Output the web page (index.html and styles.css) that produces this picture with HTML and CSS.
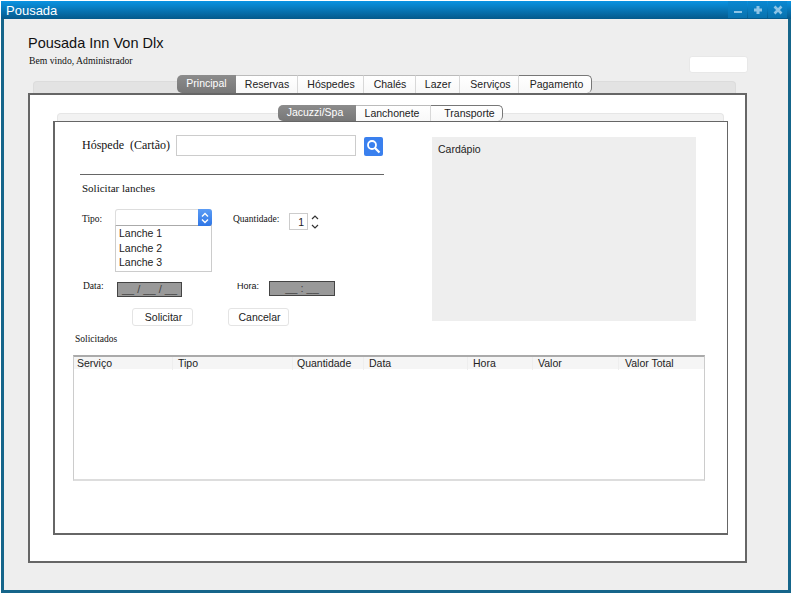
FILE: index.html
```html
<!DOCTYPE html>
<html lang="pt">
<head>
  <meta charset="UTF-8" />
  <title>Pousada</title>
  <link rel="stylesheet" href="styles.css">
</head>
<body>
  <div class="window">
    <div class="titlebar">
      <span class="title">Pousada</span>
      <div class="controls">
        <span class="ctrl"><svg width="10" height="10" viewBox="0 0 10 10"><path d="M1 7h8" stroke="#8cc4e6" stroke-width="2"/></svg></span>
        <span class="ctrl"><svg width="10" height="10" viewBox="0 0 10 10"><path d="M1 5h8M5 1v8" stroke="#8cc4e6" stroke-width="3"/></svg></span>
        <span class="ctrl"><svg width="10" height="10" viewBox="0 0 10 10"><path d="M1.5 1.5l7 7M8.500 1.500l-7 7" stroke="#8cc4e6" stroke-width="2.600"/></svg></span>
      </div>
    </div>

    <div class="content">
      <header class="app-header">
        <div class="brand">
          <h1>Pousada Inn Von Dlx</h1>
          <p class="welcome">Bem vindo, Administrador</p>
        </div>
        <div class="header-box"></div>
      </header>

      <div class="track main-track">
        <a class="tab active">Principal</a>
        <a class="tab t-reservas">Reservas</a>
        <a class="tab t-hospedes">Hóspedes</a>
        <a class="tab t-chales">Chalés</a>
        <a class="tab t-lazer">Lazer</a>
        <a class="tab t-servicos">Serviços</a>
        <a class="tab t-pagamento last">Pagamento</a>
      </div>

      <div class="outer-panel">
        <div class="track sub-track">
          <a class="tab active t-jacuzzi">Jacuzzi/Spa</a>
          <a class="tab t-lanchonete">Lanchonete</a>
          <a class="tab t-transporte last">Transporte</a>
        </div>

        <div class="inner-panel">
          <div class="columns">
            <div class="form">
              <div class="guest-row">
                <label class="guest-label">Hóspede&nbsp; (Cartão)</label>
                <input class="guest-input" type="text">
                <button class="search-btn">
                  <svg width="15" height="15" viewBox="0 0 15 15"><circle cx="6" cy="6" r="4" fill="none" stroke="#fff" stroke-width="1.800"/><path d="M9 9l4.500 4.500" stroke="#fff" stroke-width="2.200"/></svg>
                </button>
              </div>
              <div class="rule"></div>
              <h2>Solicitar lanches</h2>

              <div class="order-row">
                <label class="small-label l-tipo">Tipo:</label>
                <div class="select-col">
                  <div class="select">
                    <span class="select-arrow">
                      <svg width="10" height="14" viewBox="0 0 10 14"><path d="M2 5.500l3-3 3 3M2 8.500l3 3 3-3" fill="none" stroke="#fff" stroke-width="1.400"/></svg>
                    </span>
                  </div>
                  <ul class="options">
                    <li>Lanche 1</li>
                    <li>Lanche 2</li>
                    <li>Lanche 3</li>
                  </ul>
                </div>
                <label class="small-label l-qtd">Quantidade:</label>
                <div class="qty">1</div>
                <svg class="spin" width="10" height="18" viewBox="0 0 10 18"><path d="M2 6l3-3 3 3M2 12l3 3 3-3" fill="none" stroke="#333" stroke-width="1.200"/></svg>
              </div>

              <div class="date-row">
                <label class="small-label l-data">Data:</label>
                <div class="mask mask-date">__ / __ / __</div>
                <label class="small-label l-hora">Hora:</label>
                <div class="mask mask-time">__ : __</div>
              </div>

              <div class="actions">
                <button class="btn">Solicitar</button>
                <button class="btn">Cancelar</button>
              </div>
            </div>

            <aside class="menu-card">Cardápio</aside>
          </div>

          <p class="requested">Solicitados</p>
          <div class="grid-table">
            <div class="grid-head">
              <span>Serviço</span>
              <span>Tipo</span>
              <span class="col-qtd">Quantidade</span>
              <span>Data</span>
              <span>Hora</span>
              <span>Valor</span>
              <span class="col-total">Valor Total</span>
            </div>
          </div>
        </div>
      </div>
    </div>
  </div>
</body>
</html>
```

FILE: styles.css
```css
* {
  box-sizing: border-box;
}

body {
  margin: 0;
  background-color: #fff;
  font-family: "Liberation Sans", Arial, sans-serif;
  color: #222;
}

.window {
  width: 790px;
  height: 592px;
  margin: 1px 0 0 1px;
  display: flex;
  flex-direction: column;
}

.titlebar {
  height: 18px;
  background: linear-gradient(#0a93e2, #05598b);
  display: flex;
  justify-content: space-between;
  padding: 0 4px 0 5px;
}

.title {
  color: #fff;
  font-size: 13px;
  line-height: 19px;
}

.controls {
  display: flex;
  gap: 1px;
}

.ctrl {
  width: 19px;
  height: 17px;
  background: linear-gradient(#0a88d2, #0872ae);
  display: flex;
  align-items: center;
  justify-content: center;
}

.content {
  flex: 1;
  background-color: #eee;
  border: solid #15658a;
  border-width: 0 3px 3px;
}

.app-header {
  display: flex;
  justify-content: space-between;
  align-items: flex-end;
  padding: 16px 40px 0 24px;
}

.brand {
  padding-bottom: 5px;
}

h1 {
  margin: 0;
  font-size: 14.5px;
  font-weight: normal;
  line-height: 17px;
  color: #111;
}

.welcome {
  margin: 2px 0 0 1px;
  font-family: "Liberation Serif", serif;
  font-size: 9.7px;
  line-height: 14px;
  color: #111;
}

.header-box {
  width: 59px;
  height: 17px;
  background-color: #fff;
  border: 1px solid #e8e8e8;
  border-radius: 3px;
}

.track {
  display: flex;
  border-radius: 4px 4px 0 0;
}

.main-track {
  width: 703px;
  height: 12px;
  margin: 8px 0 0 29px;
  padding-left: 143px;
  background-color: #e3e3e3;
  border: 1px solid #dcdcdc;
  border-bottom: 0;
}

.sub-track {
  width: 667px;
  height: 8px;
  margin: 18px 0 0 27px;
  padding-left: 220px;
  background-color: #f2f2f2;
  border: 1px solid #e6e6e6;
  border-bottom: 0;
}

.tab {
  height: 18px;
  margin-top: -7px;
  padding-left: 1px;
  background: linear-gradient(#fff, #f8f8f8);
  border-top: 1px solid #bbb;
  border-right: 1px solid #d8d8d8;
  font-size: 10.5px;
  line-height: 16px;
  text-align: center;
  color: #222;
  width: 59px;
  flex: none;
}

.tab.active {
  width: 59px;
  padding-left: 0;
  background: linear-gradient(#8c8c8c, #777);
  border: 0;
  border-radius: 5px 0 0 5px;
  color: #fff;
  line-height: 17px;
}

.tab.last {
  border: 1px solid #777;
  border-left: 0;
  border-bottom: 0;
  border-radius: 0 5px 5px 0;
}

.t-reservas { width: 62px; }
.t-hospedes { width: 66px; }
.t-chales { width: 52px; }
.t-lazer { width: 44px; }
.t-servicos { width: 59px; padding-left: 3px; }
.t-pagamento { width: 73px; padding-left: 3px; }

.sub-track .tab {
  height: 16px;
  margin-top: -9px;
  font-size: 10.5px;
  line-height: 15px;
}

.sub-track .t-jacuzzi {
  width: 78px;
  padding-right: 4px;
}

.sub-track .t-lanchonete {
  width: 75px;
  padding-left: 0;
  padding-right: 2px;
}

.sub-track .t-transporte {
  width: 72px;
  padding-left: 6px;
}

.outer-panel {
  width: 719px;
  height: 470px;
  margin-left: 24px;
  background-color: #fff;
  border: 2px solid #666;
}

.inner-panel {
  width: 675px;
  height: 414px;
  margin-left: 23px;
  padding: 13px 0 0 18px;
  border: solid #666;
  border-width: 1px 1px 2px 2px;
}

.columns {
  display: flex;
}

.form {
  width: 359px;
}

.guest-row {
  display: flex;
  align-items: center;
  height: 21px;
  margin-left: 9px;
}

.guest-label {
  width: 94px;
  font-family: "Liberation Serif", serif;
  font-size: 12px;
  color: #111;
}

.guest-input {
  width: 180px;
  height: 21px;
  border: 1px solid #ccc;
  padding: 0;
  background-color: #fff;
}

.search-btn {
  width: 19px;
  height: 19px;
  margin: 2px 0 0 8px;
  padding: 0;
  border: 0;
  border-radius: 2px;
  background-color: #3a80ee;
  display: flex;
  align-items: center;
  justify-content: center;
}

.rule {
  width: 304px;
  height: 1px;
  margin: 18px 0 0 7px;
  background-color: #666;
}

h2 {
  margin: 7px 0 0 9px;
  font-family: "Liberation Serif", serif;
  font-size: 11px;
  font-weight: normal;
  line-height: 13px;
  color: #111;
}

.order-row {
  display: flex;
  align-items: flex-start;
  margin-top: 14px;
}

.small-label {
  font-family: "Liberation Serif", serif;
  font-size: 9.5px;
  line-height: 12px;
  color: #111;
}

.l-tipo {
  width: 33px;
  margin: 4px 0 0 9px;
}

.select-col {
  width: 97px;
}

.select {
  height: 17px;
  background-color: #fff;
  border: 1px solid #ddd;
  border-bottom-color: #aaa;
  border-radius: 3px 3px 0 0;
  display: flex;
  justify-content: flex-end;
}

.select-arrow {
  width: 14px;
  margin: -1px -1px -1px 0;
  background: linear-gradient(#5b9cf5, #2f76e6);
  border-radius: 0 3px 3px 0;
  display: flex;
  align-items: center;
  justify-content: center;
}

.options {
  height: 46px;
  margin: 0;
  padding: 0 0 0 3px;
  list-style: none;
  background-color: #fff;
  border: 1px solid #ccc;
  border-top: 0;
  font-size: 10.5px;
  line-height: 14.500px;
}

.l-qtd {
  width: 56px;
  margin: 4px 0 0 21px;
}

.qty {
  width: 19px;
  height: 17px;
  margin-top: 4px;
  border: 1px solid #ccc;
  font-size: 10.5px;
  line-height: 16px;
  text-align: right;
  padding-right: 3px;
}

.spin {
  margin: 4px 0 0 2px;
}

.date-row {
  display: flex;
  align-items: flex-start;
  margin-top: 9px;
}

.l-data {
  width: 34px;
  margin: 0 0 0 10px;
  line-height: 10px;
}

.l-hora {
  width: 32px;
  margin: 0 0 0 55px;
  font-family: "Liberation Sans", Arial, sans-serif;
  font-size: 9px;
  line-height: 10px;
}

.mask {
  height: 15px;
  background-color: #999;
  border: 1px solid #444;
  font-size: 11px;
  line-height: 13px;
  text-align: center;
  color: #444;
}

.mask-date {
  width: 65px;
  margin-top: 1px;
}

.mask-time {
  width: 66px;
}

.actions {
  display: flex;
  gap: 35px;
  margin: 11px 0 0 59px;
}

.btn {
  width: 61px;
  height: 18px;
  padding: 0 0 0 2px;
  background-color: #fff;
  border: 1px solid #e4e4e4;
  border-radius: 3px;
  font-family: "Liberation Sans", Arial, sans-serif;
  font-size: 10.5px;
  color: #222;
}

.menu-card {
  width: 264px;
  height: 184px;
  margin-top: 2px;
  padding: 6px;
  background-color: #eee;
  font-size: 10.5px;
  line-height: 13px;
}

.requested {
  margin: 7px 0 0 2px;
  font-family: "Liberation Serif", serif;
  font-size: 9.5px;
  line-height: 12px;
  color: #111;
}

.grid-table {
  width: 632px;
  height: 126px;
  margin-top: 10px;
  border: 1px solid #ccc;
  border-top: 2px solid #aaa;
  border-bottom-width: 2px;
  border-bottom-color: #ddd;
}

.grid-head {
  display: grid;
  grid-template-columns: 98px 120px 71px 104px 65px 86px 1fr;
  height: 12px;
  background-color: #f5f5f5;
  font-size: 10.5px;
  line-height: 13px;
}

.grid-head span {
  padding-left: 5px;
  border-left: 1px solid #eee;
  white-space: nowrap;
}

.grid-head .col-qtd {
  padding-left: 4px;
}

.grid-head .col-total {
  padding-left: 6px;
}

.grid-head span:first-child {
  padding-left: 3px;
  border-left: 0;
}
```
